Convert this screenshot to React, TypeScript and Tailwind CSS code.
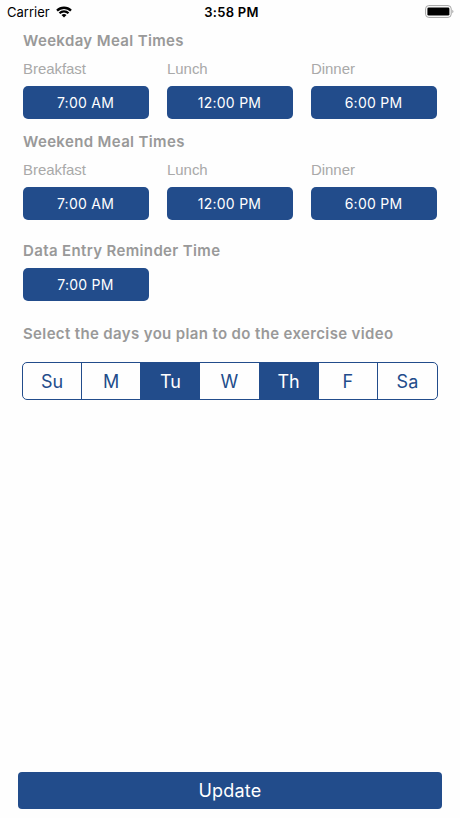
import React, { useState } from 'react';

interface Meal {
  label: string;
  time: string;
}

const MEALS: Meal[] = [
  { label: 'Breakfast', time: '7:00 AM' },
  { label: 'Lunch', time: '12:00 PM' },
  { label: 'Dinner', time: '6:00 PM' },
];

const DAYS = ['Su', 'M', 'Tu', 'W', 'Th', 'F', 'Sa'];

const StatusBar: React.FC = () => (
  <div className="grid grid-cols-3 items-center h-6 pl-[7px] pr-[6px] text-black">
    <div className="flex items-center gap-[6px]">
      <span className="text-[13px] leading-6">Carrier</span>
      <svg className="-mt-px" width="16" height="12" viewBox="0 0 16 12" fill="none" stroke="#000" strokeWidth="2.3">
        <path d="M1 4.6a10 10 0 0 1 14 0" />
        <path d="M3.5 7.3a6.4 6.4 0 0 1 9 0" />
        <path d="M8 11.5 5.5 9.1a3.6 3.6 0 0 1 5 0Z" fill="#000" stroke="none" />
      </svg>
    </div>
    <span className="pl-[2px] text-center text-[13px] leading-6 font-semibold tracking-[0.3px]">3:58 PM</span>
    <svg className="justify-self-end -mt-px" width="29" height="13" viewBox="0 0 29 13">
      <rect x="0.6" y="0.6" width="25.6" height="11.8" rx="3.2" fill="#fff" stroke="#a3a3a3" />
      <rect x="2.4" y="2.4" width="22" height="8.2" rx="1.3" fill="#000" />
      <path d="M27.3 4.7c1.5.6 1.5 3 0 3.6Z" fill="#a3a3a3" />
    </svg>
  </div>
);

const Heading: React.FC<{ children: React.ReactNode }> = ({ children }) => (
  <h2 className="text-[15px] leading-5 font-semibold tracking-[0.36px] text-[#999999] whitespace-nowrap">{children}</h2>
);

const TimeButton: React.FC<{ time: string }> = ({ time }) => (
  <button className="block w-[126px] h-[33px] pr-px rounded-[5px] bg-[#224c8b] text-white text-sm tracking-[0.25px]">{time}</button>
);

const MealTimes: React.FC<{ title: string }> = ({ title }) => (
  <section>
    <Heading>{title}</Heading>
    <div className="flex gap-[18px] mt-2">
      {MEALS.map(meal => (
        <div key={meal.label}>
          <div className="mb-[7px] font-['Liberation_Sans',sans-serif] text-[15px] leading-5 tracking-[-0.05px] text-[#a9a9a9]">{meal.label}</div>
          <TimeButton time={meal.time} />
        </div>
      ))}
    </div>
  </section>
);

const App: React.FC = () => {
  const [selected, setSelected] = useState<string[]>(['Tu', 'Th']);

  const toggleDay = (day: string) => {
    setSelected(prev => (prev.includes(day) ? prev.filter(d => d !== day) : [...prev, day]));
  };

  return (
    <div className="flex flex-col h-screen min-h-[818px] bg-[#fefefe] font-['Inter',sans-serif]">
      <StatusBar />

      <main className="flex-1 pl-[23px] pr-[22px] pt-[7px]">
        <MealTimes title="Weekday Meal Times" />
        <div className="mt-[13px]">
          <MealTimes title="Weekend Meal Times" />
        </div>

        <section className="mt-[21px]">
          <Heading>Data Entry Reminder Time</Heading>
          <div className="mt-[7px]">
            <TimeButton time="7:00 PM" />
          </div>
        </section>

        <section className="mt-[23px]">
          <Heading>Select the days you plan to do the exercise video</Heading>
          <div className="grid grid-cols-7 h-[38px] mt-[18px] -ml-px rounded-[5px] border border-[#224c8b] overflow-hidden divide-x divide-[#224c8b]">
            {DAYS.map(day => (
              <button
                key={day}
                onClick={() => toggleDay(day)}
                className={`pt-px text-lg ${selected.includes(day) ? 'bg-[#224c8b] text-white' : 'text-[#224c8b]'}`}
              >
                {day}
              </button>
            ))}
          </div>
        </section>
      </main>

      <footer className="px-[18px] pb-[9px]">
        <button className="block w-full h-[37px] pt-px rounded-[4px] bg-[#224c8b] text-white text-lg tracking-[0.2px]">Update</button>
      </footer>
    </div>
  );
};

export default App;
